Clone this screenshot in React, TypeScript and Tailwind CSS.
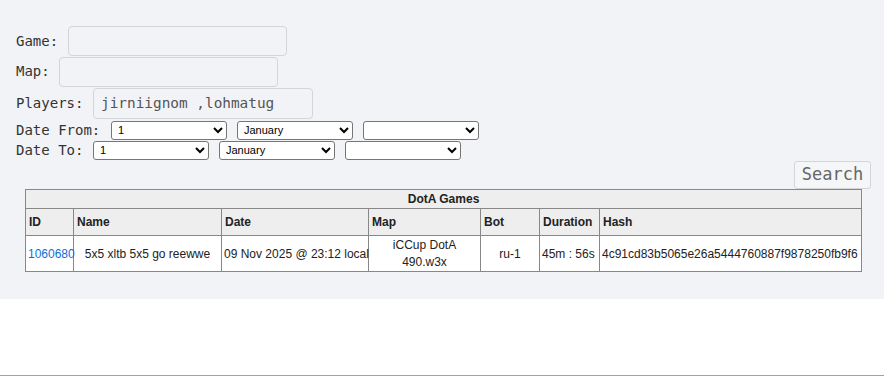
import React from "react";

const mono = { fontFamily: '"DejaVu Sans Mono", monospace' };

function Sel({ value }: { value: string }) {
  return (
    <select
      className="w-[116px] h-[19px] shrink-0 border border-[#767676] rounded-[3px] bg-white text-black text-[11px] pl-[2px] font-['Liberation_Sans',Arial,sans-serif]"
      defaultValue={value}
    >
      <option value={value}>{value}</option>
    </select>
  );
}

export default function App() {
  const th = "border border-[#888] text-left font-bold px-[3px] h-[27px]";
  const td = "border border-[#888] px-[2px]";
  const lab = "shrink-0 whitespace-pre";
  return (
    <div className="w-[884px] h-[376px] bg-white flex flex-col">
      <div className="bg-[#f2f3f7] pt-[26px] pb-[27px]">
        <div className="pl-[16px] text-[14px] text-[#333]" style={mono}>
          <div className="flex items-center h-[30px]">
            <span className={`${lab} w-[52px]`}>Game:</span>
            <input className="w-[219px] h-[30px] border border-[#d4d5d9] rounded-[4px] bg-transparent" />
          </div>
          <div className="flex items-center h-[31px]">
            <span className={`${lab} w-[43px]`}>Map:</span>
            <input className="w-[219px] h-[30px] border border-[#d4d5d9] rounded-[4px] bg-transparent" />
          </div>
          <div className="flex items-center h-[32px]">
            <span className={`${lab} w-[77px]`}>Players:</span>
            <input
              className="w-[220px] h-[31px] border border-[#d4d5d9] rounded-[4px] bg-transparent px-[7px] text-[#555] text-[14.4px]"
              defaultValue="jirniignom ,lohmatug"
              style={mono}
            />
          </div>
          <div className="flex items-center h-[20px] mt-[1px] gap-[10px]">
            <span className={`${lab} w-[85px]`}>Date From:</span>
            <Sel value="1" />
            <Sel value="January" />
            <Sel value="" />
          </div>
          <div className="flex items-center h-[20px] gap-[10px]">
            <span className={`${lab} w-[67px]`}>Date To:</span>
            <Sel value="1" />
            <Sel value="January" />
            <Sel value="" />
          </div>
        </div>
        <div className="flex justify-end pr-[13px] mt-[1px]">
          <button
            className="w-[77px] h-[28px] border border-[#d4d5d9] rounded-[3px] bg-[#f5f6f8] text-[17px] text-[#666]"
            style={mono}
          >
            Search
          </button>
        </div>
        <div className="pl-[25px]">
          <table
            className="table-fixed border-collapse w-[836px] text-[12px] text-[#222] bg-white"
            style={{ fontFamily: '"Liberation Sans", Arial, sans-serif' }}
          >
            <colgroup>
              <col style={{ width: 48 }} />
              <col style={{ width: 148 }} />
              <col style={{ width: 147 }} />
              <col style={{ width: 112 }} />
              <col style={{ width: 59 }} />
              <col style={{ width: 60 }} />
              <col style={{ width: 262 }} />
            </colgroup>
            <thead>
              <tr className="bg-[#eeeeee]">
                <th colSpan={7} className="border border-[#888] h-[18px] font-bold text-center">
                  DotA Games
                </th>
              </tr>
              <tr className="bg-[#eeeeee]">
                <th className={th}>ID</th>
                <th className={th}>Name</th>
                <th className={th}>Date</th>
                <th className={th}>Map</th>
                <th className={th}>Bot</th>
                <th className={th}>Duration</th>
                <th className={th}>Hash</th>
              </tr>
            </thead>
            <tbody>
              <tr className="h-[36px]">
                <td className={`${td} px-[1px]`}>
                  <a className="text-[#0a6fd8]" href="#">1060680</a>
                </td>
                <td className={`${td} text-center`}>5x5 xltb 5x5 go reewwe</td>
                <td className={`${td} whitespace-nowrap`}>09 Nov 2025 @ 23:12 local</td>
                <td className={`${td} text-center leading-[17px]`}>
                  iCCup DotA
                  <br />
                  490.w3x
                </td>
                <td className={`${td} text-center`}>ru-1</td>
                <td className={`${td} whitespace-nowrap`}>45m : 56s</td>
                <td className={`${td} whitespace-nowrap`}>4c91cd83b5065e26a5444760887f9878250fb9f6</td>
              </tr>
            </tbody>
          </table>
        </div>
      </div>
      <div className="flex-1" />
      <div className="h-px bg-[#9ea1ab]" />
    </div>
  );
}
